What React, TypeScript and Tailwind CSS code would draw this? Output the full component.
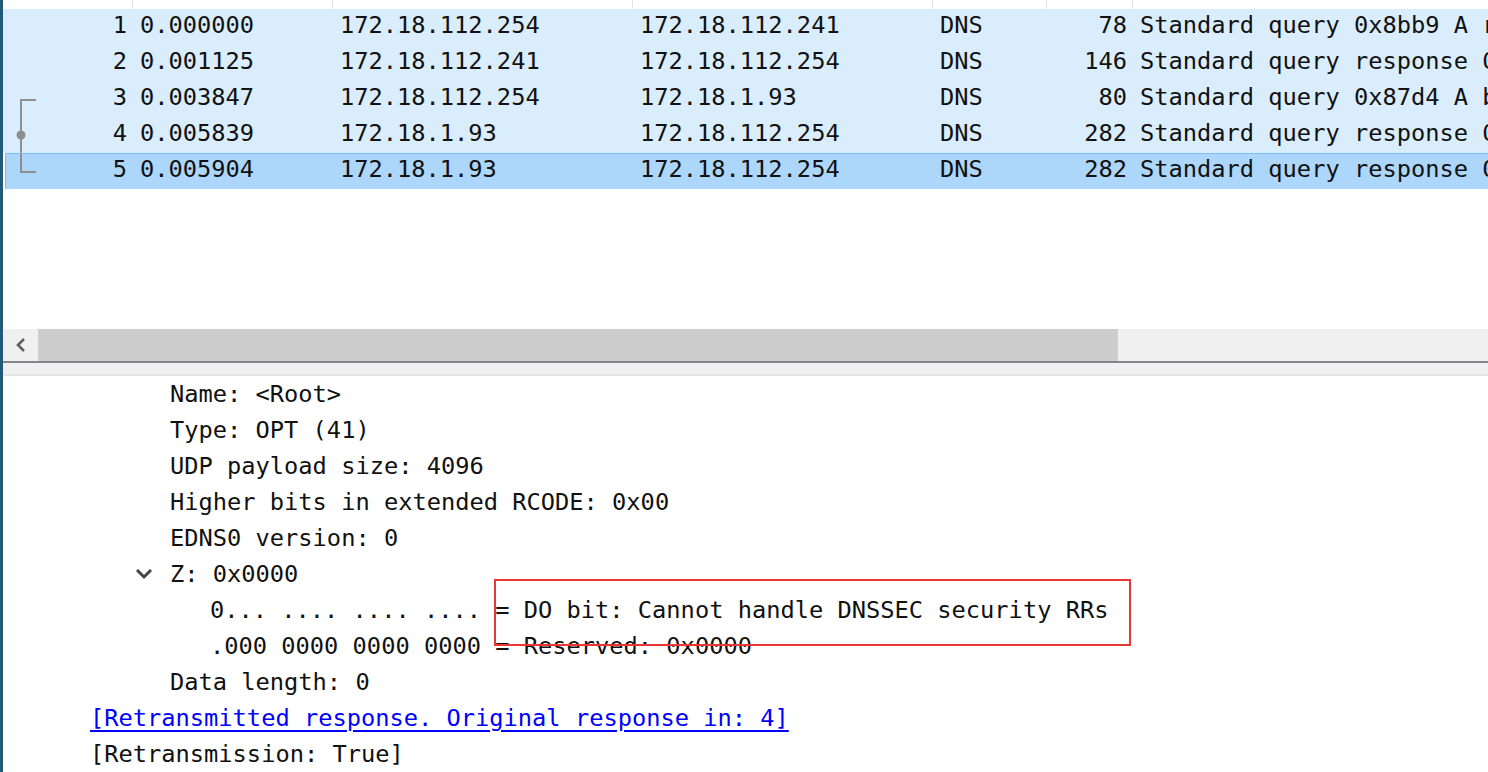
import React from "react";

type Packet = {
    no: number;
    time: string;
    src: string;
    dst: string;
    proto: string;
    len: number;
    info: string;
    selected?: boolean;
    bracket?: "top" | "mid" | "bottom";
};

const packets: Packet[] = [
    { no: 1, time: "0.000000", src: "172.18.112.254", dst: "172.18.112.241", proto: "DNS", len: 78, info: "Standard query 0x8bb9 A rs.example.com" },
    { no: 2, time: "0.001125", src: "172.18.112.241", dst: "172.18.112.254", proto: "DNS", len: 146, info: "Standard query response 0x8bb9 A rs.example.com" },
    { no: 3, time: "0.003847", src: "172.18.112.254", dst: "172.18.1.93", proto: "DNS", len: 80, info: "Standard query 0x87d4 A bs.example.com", bracket: "top" },
    { no: 4, time: "0.005839", src: "172.18.1.93", dst: "172.18.112.254", proto: "DNS", len: 282, info: "Standard query response 0x87d4 A bs.example.com", bracket: "mid" },
    { no: 5, time: "0.005904", src: "172.18.1.93", dst: "172.18.112.254", proto: "DNS", len: 282, info: "Standard query response 0x87d4 A bs.example.com", bracket: "bottom", selected: true },
];

const Bracket = ({ kind, offset }: { kind: Packet["bracket"]; offset: number }) => {
    if (!kind) return null;
    const x = 18 - offset;
    return (
        <svg width="40" height="36" className="absolute left-0 top-0">
            {kind === "top" && (
                <>
                    <line x1={x} y1="19" x2={x + 15} y2="19" stroke="#8e8e8e" strokeWidth="2" />
                    <line x1={x} y1="18" x2={x} y2="36" stroke="#8e8e8e" strokeWidth="2" />
                </>
            )}
            {kind === "mid" && (
                <>
                    <line x1={x} y1="0" x2={x} y2="36" stroke="#8e8e8e" strokeWidth="2" />
                    <circle cx={x} cy="18" r="4.5" fill="#8e8e8e" />
                </>
            )}
            {kind === "bottom" && (
                <>
                    <line x1={x} y1="-1" x2={x} y2="19" stroke="#8e8e8e" strokeWidth="2" />
                    <line x1={x} y1="18" x2={x + 15} y2="18" stroke="#8e8e8e" strokeWidth="2" />
                </>
            )}
        </svg>
    );
};

const PacketRow = ({ p }: { p: Packet }) => (
    <div
        className={
            p.selected
                ? "flex h-[36px] ml-[2px] bg-[#add6fb] border-t border-l border-[#7cbcf6] leading-[31px]"
                : "flex h-[36px] bg-[#daedfc] leading-[32px]"
        }
    >
        <div className={(p.selected ? "w-[127px]" : "w-[130px]") + " relative shrink-0 text-right pr-[6px]"}>
            <Bracket kind={p.bracket} offset={p.selected ? 3 : 0} />
            {p.no}
        </div>
        <div className="w-[200px] shrink-0 pl-[7px]">{p.time}</div>
        <div className="w-[300px] shrink-0 pl-[7px]">{p.src}</div>
        <div className="w-[300px] shrink-0 pl-[7px]">{p.dst}</div>
        <div className="w-[114px] shrink-0 pl-[7px]">{p.proto}</div>
        <div className="w-[86px] shrink-0 text-right pr-[6px]">{p.len}</div>
        <div className="flex-1 pl-[7px] whitespace-pre overflow-hidden">{p.info}</div>
    </div>
);

const DetailLine = ({ indent, children, className }: { indent: number; children: React.ReactNode; className?: string }) => (
    <div className={"h-[36px] whitespace-pre " + (className ?? "")} style={{ paddingLeft: indent }}>
        {children}
    </div>
);

export default function App() {
    return (
        <div className="w-[1488px] h-[772px] overflow-hidden flex bg-white font-['DejaVu_Sans_Mono',monospace] text-[23.7px] leading-[36px] text-[#111]">
            <div className="w-[3px] shrink-0 bg-[#235a78]" />
            <div className="flex-1 flex flex-col min-w-0">
                {/* column header remnant */}
                <div className="flex h-[9px] bg-white">
                    <div className="w-[130px] shrink-0 border-r border-[#e3e3e3]" />
                    <div className="w-[200px] shrink-0 border-r border-[#e3e3e3]" />
                    <div className="w-[300px] shrink-0 border-r border-[#e3e3e3]" />
                    <div className="w-[300px] shrink-0 border-r border-[#e3e3e3]" />
                    <div className="w-[114px] shrink-0 border-r border-[#e3e3e3]" />
                    <div className="w-[86px] shrink-0 border-r border-[#e3e3e3]" />
                    <div className="flex-1" />
                </div>

                {packets.map((p) => (
                    <PacketRow key={p.no} p={p} />
                ))}

                <div className="h-[141px] bg-white" />

                {/* horizontal scrollbar */}
                <div className="flex h-[32px] bg-[#f0f0f0]">
                    <div className="w-[35px] flex items-center justify-center">
                        <svg width="12" height="14" viewBox="0 0 12 14">
                            <polyline points="9,1 3,7 9,13" fill="none" stroke="#606060" strokeWidth="2.6" />
                        </svg>
                    </div>
                    <div className="w-[1080px] bg-[#cdcdcd]" />
                </div>

                <div className="h-[2px] bg-[#85858e]" />
                <div className="h-[11px] bg-[#f0f0f0]" />
                <div className="h-[2px] bg-[#e6e6e6]" />

                {/* packet details */}
                <div className="relative flex-1 bg-white">
                    <DetailLine indent={167}>Name: &lt;Root&gt;</DetailLine>
                    <DetailLine indent={167}>Type: OPT (41)</DetailLine>
                    <DetailLine indent={167}>UDP payload size: 4096</DetailLine>
                    <DetailLine indent={167}>Higher bits in extended RCODE: 0x00</DetailLine>
                    <DetailLine indent={167}>EDNS0 version: 0</DetailLine>
                    <div className="h-[36px] flex items-center pl-[132px]">
                        <svg width="18" height="12" viewBox="0 0 18 12" className="mr-[17px]">
                            <polyline points="2,2 9,9 16,2" fill="none" stroke="#444" strokeWidth="3" />
                        </svg>
                        <span>Z: 0x0000</span>
                    </div>
                    <DetailLine indent={207}>0... .... .... .... = DO bit: Cannot handle DNSSEC security RRs</DetailLine>
                    <DetailLine indent={207}>.000 0000 0000 0000 = Reserved: 0x0000</DetailLine>
                    <DetailLine indent={167}>Data length: 0</DetailLine>
                    <DetailLine indent={87} className="text-[#0000ff] underline underline-offset-[4px]">
                        [Retransmitted response. Original response in: 4]
                    </DetailLine>
                    <DetailLine indent={87}>[Retransmission: True]</DetailLine>

                    {/* highlight annotation */}
                    <div className="absolute left-[491px] top-[203px] w-[637px] h-[67px] border-2 border-[#ec3535]" />
                </div>
            </div>
        </div>
    );
}
